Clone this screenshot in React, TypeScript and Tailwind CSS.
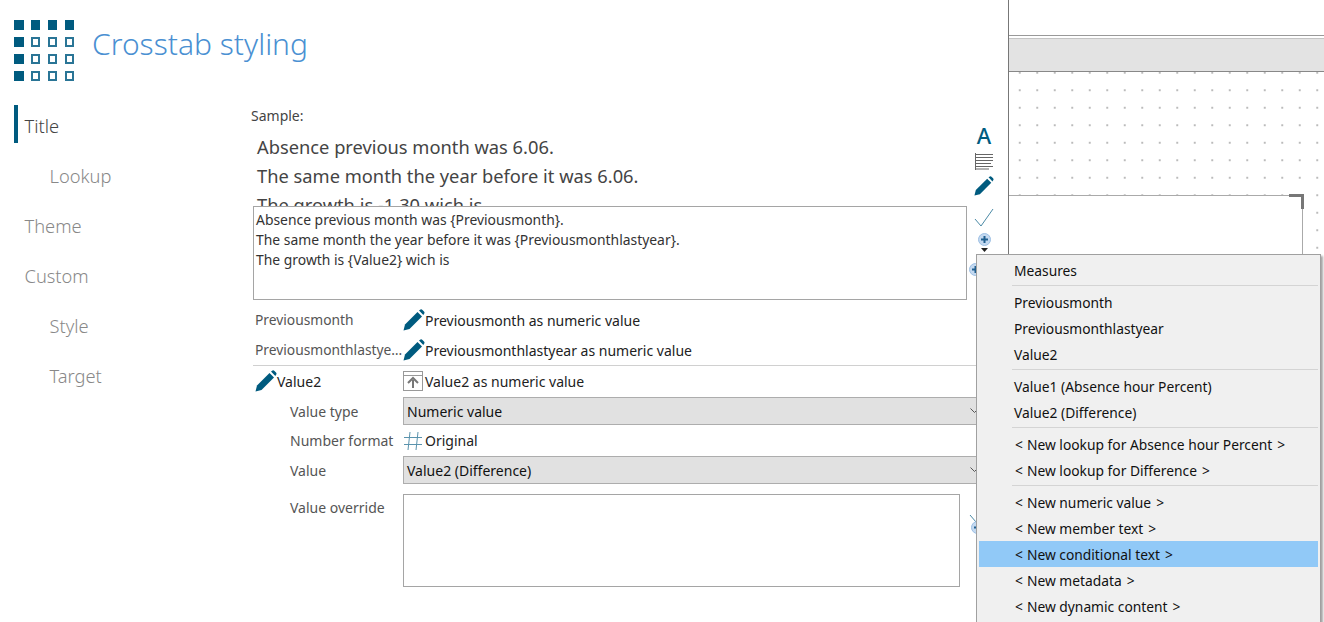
import type { ReactNode } from "react";

const fontStack = "font-['Noto_Sans','Open_Sans',sans-serif]";

function Pencil({ size = 22 }: { size?: number }) {
  return (
    <svg width={size} height={size} viewBox="0 0 22 22" className="shrink-0">
      <path d="M0.5 21.5 L2 15.5 L14.5 3 L19 7.5 L6.5 20 Z" fill="#005b7f" />
      <path d="M16 1.5 L17.5 0.5 Q18.5 0 19.5 1 L21 2.5 Q22 3.5 21.3 4.5 L20.3 6 Z" fill="#005b7f" />
    </svg>
  );
}

function GridLogo() {
  const rows = [0, 1, 2, 3];
  return (
    <div className="grid grid-cols-4 w-[60px] h-[60px] gap-x-[7.5px] gap-y-[7.5px]">
      {rows.map((r) =>
        rows.map((c) => (
          <div
            key={`${r}-${c}`}
            className={
              r === 0 || c === 0
                ? "bg-[#005b7f] w-[9.5px] h-[9.5px] m-auto"
                : "border-[2.5px] border-[#2a7596] w-[9.5px] h-[9.5px] m-auto"
            }
          />
        )),
      )}
    </div>
  );
}

function PlusCircle({ size = 13 }: { size?: number }) {
  return (
    <svg width={size} height={size} viewBox="0 0 13 13" className="shrink-0">
      <circle cx="6.5" cy="6.5" r="6" fill="#c4d9f0" stroke="#9dbfe3" />
      <path d="M6.5 3 V10 M3 6.5 H10" stroke="#1f5f8f" strokeWidth="2" />
    </svg>
  );
}

function Check({ size = 20 }: { size?: number }) {
  return (
    <svg width={size} height={size} viewBox="0 0 20 20" fill="none" className="shrink-0">
      <path d="M1 11 L7 18 L19 1" stroke="#4b8aa6" strokeWidth="1" />
    </svg>
  );
}

function Row({ label, icon, children }: { label: string; icon: ReactNode; children: ReactNode }) {
  return (
    <div className="flex items-center h-[30px]">
      <div className="w-[148px] truncate text-[#555] text-[13.8px]">{label}</div>
      <div className="flex items-center text-[#222]">
        {icon}
        <span>{children}</span>
      </div>
    </div>
  );
}

function FakeSelect({ value }: { value: string }) {
  return (
    <div className="flex items-center justify-between h-[28px] w-[584px] bg-[#e1e1e1] border border-[#adadad] px-[3px] text-[#111]">
      <span>{value}</span>
      <svg width="9" height="6" viewBox="0 0 9 6" fill="none" className="mr-[4px]">
        <path d="M0.5 0.5 L4.5 4.5 L8.5 0.5" stroke="#555" />
      </svg>
    </div>
  );
}

const menuGroups = [
  ["Measures"],
  ["Previousmonth", "Previousmonthlastyear", "Value2"],
  ["Value1 (Absence hour Percent)", "Value2 (Difference)"],
  ["< New lookup for Absence hour Percent >", "< New lookup for Difference >"],
  ["< New numeric value >", "< New member text >", "< New conditional text >", "< New metadata >", "< New dynamic content >"],
];

function InsertMenu() {
  return (
    <div className="absolute left-[976px] top-[254px] w-[345px] h-[370px] bg-[#f0f0f0] border border-[#a0a0a0] shadow-[2px_2px_2px_rgba(0,0,0,0.35)] pt-[2px] px-[2px] text-[13.8px] text-[#111]">
      {menuGroups.map((group, i) => (
        <div key={i}>
          {i > 0 && <div className="h-[1px] bg-[#d4d4d4] ml-[33px] mt-[2px] mb-[3px]" />}
          {group.map((item) => (
            <div
              key={item}
              className={`h-[26px] flex items-center pl-[35px] pt-[2px] ${item === "< New conditional text >" ? "bg-[#91c9f7]" : ""}`}
            >
              {item.startsWith("<") ? (
                <>
                  <span className="ml-[1px] mr-[4px]">&lt;</span>
                  {item.slice(2, -2)}
                  <span className="ml-[5px]">&gt;</span>
                </>
              ) : (
                item
              )}
            </div>
          ))}
        </div>
      ))}
    </div>
  );
}

export default function App() {
  const navItems = [
    { name: "Title", active: true, indent: false },
    { name: "Lookup", active: false, indent: true },
    { name: "Theme", active: false, indent: false },
    { name: "Custom", active: false, indent: false },
    { name: "Style", active: false, indent: true },
    { name: "Target", active: false, indent: true },
  ];

  return (
    <div className={`relative flex w-[1324px] h-[622px] overflow-hidden bg-white text-[14px] ${fontStack}`}>
      <div className="w-[1009px] shrink-0 border-r border-[#777] flex flex-col">
        <div className="flex items-center h-[100px] pl-[14px] gap-[18px]">
          <GridLogo />
          <h1 className="text-[30px] font-light text-[#4a90d2] m-0 mb-[14px]">Crosstab styling</h1>
        </div>
        <div className="flex flex-1 min-h-0">
          <ul className="w-[251px] shrink-0 list-none p-0 m-0 pl-[14px] text-[18.3px] font-light pt-[1px]">
            {navItems.map((n) => (
              <li key={n.name} className="h-[50px] flex items-center">
                <div
                  className={`h-[38px] -mt-[4px] pt-[4px] flex items-center border-l-4 ${n.active ? "border-[#005b7f] text-[#444]" : "border-transparent text-[#888]"} ${n.indent ? "pl-[31.5px]" : "pl-[6.5px]"}`}
                >
                  {n.name}
                </div>
              </li>
            ))}
          </ul>
          <div className="flex-1 min-w-0">
            <div className="text-[#444] h-[30px] flex items-center">Sample:</div>
            <div className="flex">
              <div className="w-[716px] pl-[2px]">
                <div className="h-[76px] overflow-hidden pl-[4px] pt-[2px] text-[18.3px] leading-[29px] text-[#444]">
                  <p className="m-0">Absence previous month was 6.06.</p>
                  <p className="m-0">The same month the year before it was 6.06.</p>
                  <p className="m-0">The growth is -1.30 wich is</p>
                </div>
                <div className="h-[94px] border border-[#a5a5a5] px-[2px] py-[3px] text-[13.9px] leading-[20px] text-[#333]">
                  <p className="m-0">Absence previous month was {"{Previousmonth}"}.</p>
                  <p className="m-0">The same month the year before it was {"{Previousmonthlastyear}"}.</p>
                  <p className="m-0">The growth is {"{Value2}"} wich is</p>
                </div>
              </div>
              <div className="flex flex-col items-center w-[24px] ml-[5px] -mt-[8px]">
                <span className="text-[#005b7f] text-[22px] font-medium leading-[26px]">A</span>
                <svg width="18" height="17" viewBox="0 0 18 17" className="mt-[5px]">
                  <path d="M1 1.5 H18 M1 4.5 H18 M1 7.5 H18 M1 10.5 H16 M1 13.5 H18 M1 16 H14" stroke="#666" />
                  <path d="M0.5 0 V17" stroke="#666" />
                </svg>
                <div className="mt-[6px]"><Pencil size={20} /></div>
                <div className="mt-[12px]"><Check /></div>
                <div className="mt-[5px]"><PlusCircle /></div>
                <svg width="7" height="4" viewBox="0 0 7 4" className="mt-[2px]"><path d="M0 0 H7 L3.5 4 Z" fill="#222" /></svg>
                <div className="mt-[11px] mr-[18px]"><PlusCircle /></div>
              </div>
            </div>
            <div className="ml-[4px] mt-[5px]">
              <Row label="Previousmonth" icon={<Pencil />}>Previousmonth as numeric value</Row>
              <Row label="Previousmonthlastyear" icon={<Pencil />}>Previousmonthlastyear as numeric value</Row>
              <div className="h-[1px] bg-[#d0d0d0] w-[753px] -ml-[2px]" />
              <div className="flex items-center h-[30px]">
                <div className="w-[148px] flex items-center text-[#222]"><Pencil />Value2</div>
                <div className="flex items-center gap-[2px] text-[#222]">
                  <svg width="20" height="20" viewBox="0 0 20 20" fill="none" className="shrink-0">
                    <rect x="0.5" y="0.5" width="19" height="19" fill="#fff" stroke="#999" />
                    <path d="M0.5 4.5 H19.5" stroke="#999" />
                    <path d="M10 17 V9 M5 12 L10 7 L15 12" stroke="#777" strokeWidth="2" />
                  </svg>
                  <span>Value2 as numeric value</span>
                </div>
              </div>
              <div className="flex items-center h-[30px]">
                <div className="w-[148px] pl-[35px] text-[#555]">Value type</div>
                <FakeSelect value="Numeric value" />
              </div>
              <div className="flex items-center h-[29px]">
                <div className="w-[148px] pl-[35px] text-[#555]">Number format</div>
                <div className="flex items-center gap-[2px] text-[#222]">
                  <svg width="20" height="20" viewBox="0 0 20 20" fill="none" className="shrink-0">
                    <path d="M7 1 L5 19 M15 1 L13 19 M1 6.5 H19 M1 13.5 H19" stroke="#5a93ad" />
                  </svg>
                  <span>Original</span>
                </div>
              </div>
              <div className="flex items-center h-[30px]">
                <div className="w-[148px] pl-[35px] text-[#555]">Value</div>
                <FakeSelect value="Value2 (Difference)" />
              </div>
              <div className="flex mt-[9px]">
                <div className="w-[148px] pl-[35px] text-[#555] pt-[3px]">Value override</div>
                <div className="w-[557px] h-[93px] border border-[#a5a5a5]" />
                <div className="flex flex-col ml-[9px] mt-[10px]">
                  <Check />
                  <div className="ml-[2px] -mt-[3px]"><PlusCircle /></div>
                </div>
              </div>
            </div>
          </div>
        </div>
      </div>
      <div className="flex-1 flex flex-col min-w-0">
        <div className="h-[36px] border-b border-[#999]" />
        <div className="h-[34px] mt-[2px] bg-[#e3e3e3] border-y border-[#c4c4c4] border-b-[#888]" />
        <div className="flex-1 bg-[radial-gradient(circle,#bbb_1px,transparent_1.2px)] bg-[size:17.5px_17.5px] bg-[position:2px_-8px] pt-[123px]">
          <div className="relative w-[294px] h-full bg-white border-t border-r border-[#aaa]">
            <div className="absolute -top-[2px] -right-[2px] w-[15px] h-[15px] border-t-[3px] border-r-[3px] border-[#777]" />
          </div>
        </div>
      </div>
      <InsertMenu />
    </div>
  );
}
